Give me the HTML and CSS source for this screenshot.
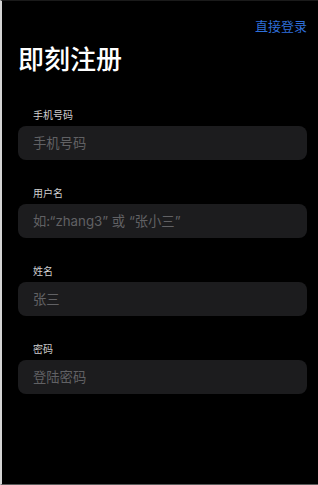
FILE: index.html
```html
<!DOCTYPE html>
<html lang="zh">
<head>
    <meta charset="UTF-8">
    <meta name="viewport" content="width=device-width, initial-scale=1.0">
    <title>即刻注册</title>
    <link rel="stylesheet" href="styles.css">
</head>
<body>
    <div class="page">
        <div class="top-bar">
            <a class="login-link" href="#">直接登录</a>
        </div>

        <h1 class="title">即刻注册</h1>

        <form class="form">
            <div class="field">
                <label class="field-label">手机号码</label>
                <input class="field-input" type="tel" placeholder="手机号码">
            </div>
            <div class="field">
                <label class="field-label">用户名</label>
                <input class="field-input" type="text" placeholder="如:“zhang3” 或 “张小三”">
            </div>
            <div class="field">
                <label class="field-label">姓名</label>
                <input class="field-input" type="text" placeholder="张三">
            </div>
            <div class="field">
                <label class="field-label">密码</label>
                <input class="field-input" type="password" placeholder="登陆密码">
            </div>
        </form>
    </div>
</body>
</html>
```

FILE: styles.css
```css
html, body {
    margin: 0;
    padding: 0;
    background-color: #000;
}

body {
    font-family: Inter, "Noto Sans CJK SC", sans-serif;
    color: #fff;
}

.page {
    box-sizing: border-box;
    min-height: 485px;
    padding: 0 11px 0 16px;
    border-left: 2px solid #d4d4d4;
    border-top: 1px solid #1a1a1a;
    border-bottom: 1px solid #5a5a5a;
}

.top-bar {
    display: flex;
    justify-content: flex-end;
    padding-top: 16px;
}

.login-link {
    font-size: 13px;
    line-height: 18px;
    color: #2f6fd9;
    text-decoration: none;
}

.title {
    margin: 10px 0 0 0;
    font-size: 26px;
    line-height: 30px;
    font-weight: 500;
}

.form {
    margin-top: 33px;
}

.field {
    display: flex;
    flex-direction: column;
    margin-bottom: 26px;
}

.field-label {
    padding-left: 15px;
    font-size: 10px;
    line-height: 14px;
    color: #cfcfcf;
    margin-bottom: 4px;
}

.field-input {
    box-sizing: border-box;
    height: 34px;
    padding: 0 15px;
    border: none;
    border-radius: 8px;
    background-color: #1c1c1e;
    color: #fff;
    font-family: inherit;
    font-size: 13.3px;
    outline: none;
}

.field-input::placeholder {
    color: #616164;
}
```
